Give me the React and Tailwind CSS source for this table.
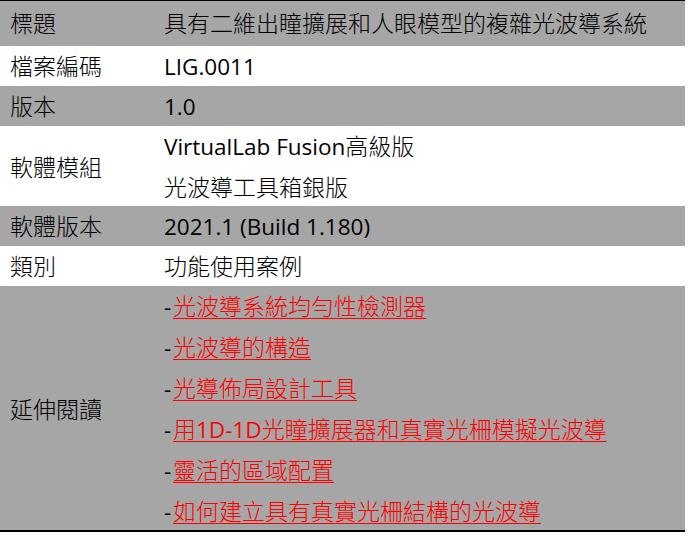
import React from "react";

const rows = [
  { label: "標題", values: ["具有二維出瞳擴展和人眼模型的複雜光波導系統"], gray: true, h: "h-[45px]" },
  { label: "檔案編碼", values: ["LIG.0011"], gray: false, h: "h-[40px]" },
  { label: "版本", values: ["1.0"], gray: true, h: "h-[40px]" },
  { label: "軟體模組", values: ["VirtualLab Fusion高級版", "光波導工具箱銀版"], gray: false, h: "h-[80px]" },
  { label: "軟體版本", values: ["2021.1 (Build 1.180)"], gray: true, h: "h-[40px]" },
  { label: "類別", values: ["功能使用案例"], gray: false, h: "h-[40px]" },
];

const links = [
  "光波導系統均勻性檢測器",
  "光波導的構造",
  "光導佈局設計工具",
  "用1D-1D光瞳擴展器和真實光柵模擬光波導",
  "靈活的區域配置",
  "如何建立具有真實光柵結構的光波導",
];

function T({ text }) {
  const parts = text.split(/([\u3000-\u9fff\uff00-\uffef]+)/).filter(Boolean);
  return (
    <>
      {parts.map((p, i) =>
        /[\u3000-\u9fff\uff00-\uffef]/.test(p) ? (
          <span key={i} className="text-[23px] font-light">{p}</span>
        ) : (
          <span key={i}>{p}</span>
        )
      )}
    </>
  );
}

export default function App() {
  return (
    <div
      className="w-[685px] bg-white text-black text-[22.5px] leading-[40px]"
      style={{ fontFamily: '"Open Sans", "Noto Sans CJK TC", sans-serif' }}
    >
      <div className="border-t border-black border-b-[2px]">
        {rows.map((r, i) => (
          <div
            key={i}
            className={`grid grid-cols-[154px_1fr] items-center ${r.h} ${r.gray ? "bg-[#a6a6a6]" : "bg-white"}`}
          >
            <div className="pl-[10px]"><T text={r.label} /></div>
            <div className="pl-[10px]">
              {r.values.map((v, j) => (
                <div key={j}><T text={v} /></div>
              ))}
            </div>
          </div>
        ))}
        <div className="grid grid-cols-[154px_1fr] items-center h-[244px] bg-[#a6a6a6]">
          <div className="pl-[10px]"><T text="延伸閱讀" /></div>
          <div className="pl-[10px]">
            {links.map((l, j) => (
              <div key={j}>
                <span className="inline-block w-[9px]">-</span>
                <a href="#" className="text-[#ff0000] underline decoration-1 underline-offset-[3px]"><T text={l} /></a>
              </div>
            ))}
          </div>
        </div>
      </div>
    </div>
  );
}
